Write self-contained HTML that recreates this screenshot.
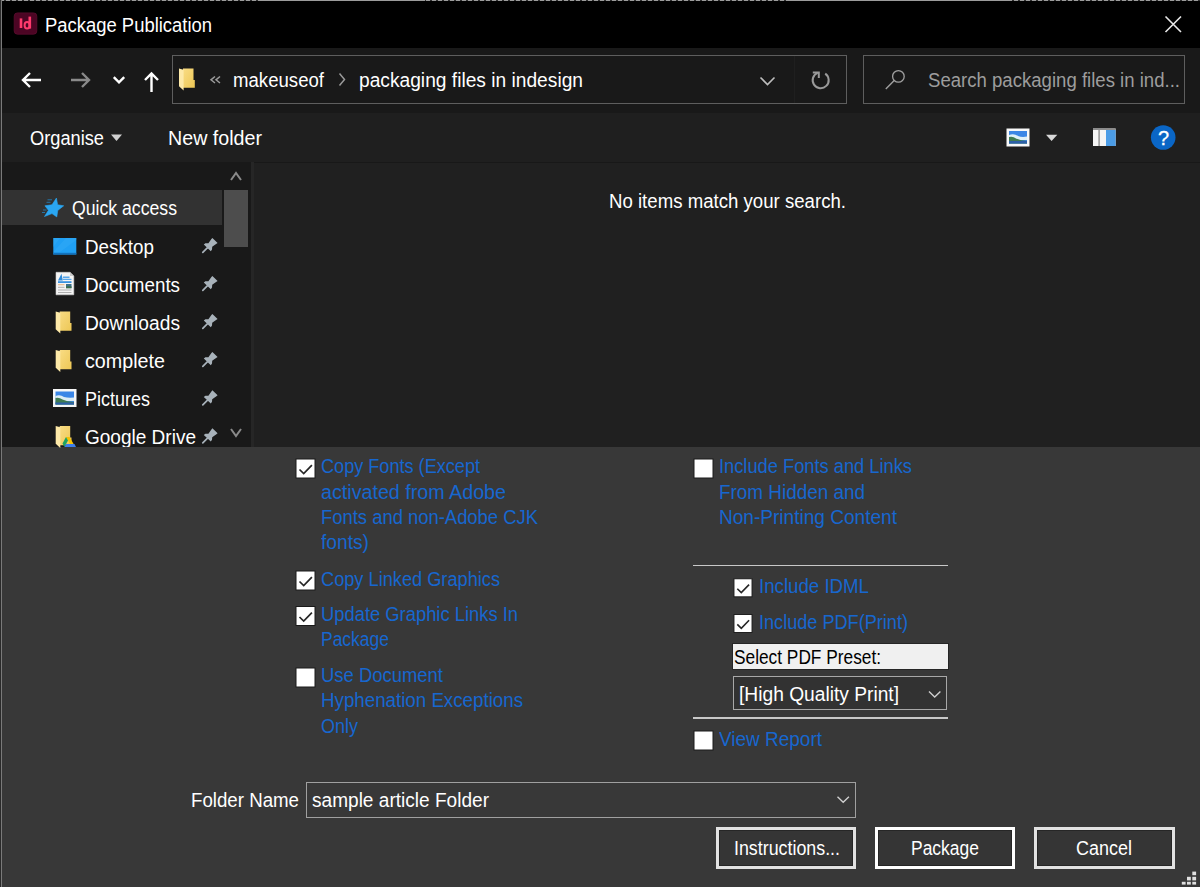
<!DOCTYPE html>
<html><head><meta charset="utf-8"><title>Package Publication</title>
<style>
html,body{margin:0;padding:0;}
body{width:1200px;height:887px;overflow:hidden;position:relative;background:#383838;font-family:'Liberation Sans', sans-serif;}
.r{position:absolute;}
.t{position:absolute;white-space:pre;font-family:'Liberation Sans', sans-serif;}
svg{position:absolute;overflow:visible;}
</style></head><body>
<!-- window backgrounds -->
<div class="r" style="left:0;top:0;width:1200px;height:48px;background:#000"></div>
<div class="r" style="left:0;top:0;width:1200px;height:1px;background:repeating-linear-gradient(90deg,#9c9c9c 0 4.5px,#303030 4.5px 6px)"></div>
<div class="r" style="left:260px;top:0;width:165px;height:1px;background:#9c9c9c"></div>
<div class="r" style="left:788px;top:0;width:222px;height:1px;background:#9c9c9c"></div>
<div class="r" style="left:1px;top:0;width:1px;height:887px;background:#7a7a7a"></div>
<div class="r" style="left:0;top:0;width:1px;height:887px;background:#2a2a2a"></div>
<!-- nav bar -->
<div class="r" style="left:2px;top:48px;width:1198px;height:65px;background:#191919"></div>
<!-- toolbar -->
<div class="r" style="left:2px;top:113px;width:1198px;height:49px;background:#1f1f1f"></div>
<!-- sidebar -->
<div class="r" style="left:2px;top:162px;width:249px;height:285px;background:#191919"></div>
<div class="r" style="left:251px;top:162px;width:3px;height:285px;background:#262626"></div>
<!-- main pane -->
<div class="r" style="left:254px;top:162px;width:946px;height:285px;background:#202020"></div>
<div class="r" style="left:254px;top:162px;width:946px;height:1px;background:#181818"></div>
<!-- quick access highlight -->
<div class="r" style="left:2px;top:190px;width:220px;height:35px;background:#323232"></div>
<!-- scrollbar thumb -->
<div class="r" style="left:224px;top:190px;width:24px;height:57px;background:#4d4d4d"></div>
<!-- bottom panel -->
<div class="r" style="left:2px;top:447px;width:1198px;height:440px;background:#383838"></div>

<!-- title icon -->
<svg style="left:0;top:0" width="50" height="48">
  <rect x="14.2" y="12.9" width="22.6" height="21.3" rx="3.2" fill="#4c0524" stroke="#5c0c2e" stroke-width="0.8"/>
  <rect x="19.7" y="18.4" width="2.6" height="9.6" fill="#ff3a6c"/>
  <rect x="28.5" y="16.6" width="2.6" height="12" fill="#ff3a6c"/>
  <ellipse cx="27.1" cy="25.3" rx="2.5" ry="3.2" fill="none" stroke="#ff3a6c" stroke-width="2"/>
</svg>


<!-- address box -->
<div class="r" style="left:172px;top:55px;width:673px;height:47px;border:1px solid #5e5e5e;background:#191919"></div>
<div class="r" style="left:794px;top:56px;width:1px;height:47px;background:#1f1f1f"></div>
<div class="r" style="left:863px;top:55px;width:320px;height:47px;border:1px solid #5e5e5e;background:#191919"></div>

<!-- Select PDF preset label bg -->
<div class="r" style="left:732px;top:642.7px;width:217px;height:27px;background:#262626"></div><div class="r" style="left:733px;top:643.7px;width:215px;height:25px;background:#f0f0f0"></div>
<!-- preset dropdown -->
<div class="r" style="left:732.5px;top:676px;width:212px;height:32px;border:1.5px solid #a8a8a8;background:#323232"></div>
<!-- separators -->
<div class="r" style="left:693px;top:564.5px;width:255px;height:1.5px;background:#c8c8c8"></div>
<div class="r" style="left:693px;top:717px;width:255px;height:1.5px;background:#c8c8c8"></div>
<!-- folder name input -->
<div class="r" style="left:306px;top:782px;width:548px;height:34px;border:1.5px solid #a0a0a0;background:#383838"></div>
<!-- buttons -->
<div class="r" style="left:716px;top:827px;width:134px;height:36px;border:3px solid #e2e2e2;background:#353535;box-shadow:inset 0 0 0 1px #262626"></div>
<div class="r" style="left:875px;top:827px;width:134px;height:36px;border:3px solid #ffffff;background:#353535;box-shadow:inset 0 0 0 1px #262626"></div>
<div class="r" style="left:1034.2px;top:827px;width:134.8px;height:36px;border:3px solid #e2e2e2;background:#353535;box-shadow:inset 0 0 0 1px #262626"></div>

<svg style="left:0;top:0" width="1200" height="887">
  <defs>
    <linearGradient id="fg" x1="0" y1="0" x2="1" y2="1"><stop offset="0" stop-color="#f9dc84"/><stop offset="1" stop-color="#edc755"/></linearGradient>
  </defs>
  <!-- close -->
  <path d="M1165.5 16.5 L1181 32 M1181 16.5 L1165.5 32" stroke="#e8e8e8" stroke-width="1.6" fill="none"/>
  <!-- nav arrows -->
  <path d="M23 80 H41 M30 73 L23 80 L30 87" stroke="#fff" stroke-width="2.4" fill="none"/>
  <path d="M71 80 H89 M82 73 L89 80 L82 87" stroke="#8a8a8a" stroke-width="2.4" fill="none"/>
  <path d="M113.8 77.2 L119 82.4 L124.2 77.2" stroke="#fff" stroke-width="2.4" fill="none"/>
  <path d="M151.5 92 V74 M145 80 L151.5 73.5 L158 80" stroke="#fff" stroke-width="2.4" fill="none"/>
  <!-- address folder -->
  <g transform="translate(179 68.5)"><path d="M4 0 H14.5 V11.5 H15.8 V19.3 H4 Z" fill="url(#fg)"/>
      <path d="M0 0 L4.6 1.3 V22 L0 17.8 Z" fill="#fde9a8"/></g>
  <!-- laquo -->
  <path d="M215 76.5 L211 79.8 L215 83 M220 76.5 L216 79.8 L220 83" stroke="#9a9a9a" stroke-width="1.5" fill="none"/>
  <!-- breadcrumb chevron -->
  <path d="M339.5 73.5 L344.5 79.5 L339.5 85.5" stroke="#9a9a9a" stroke-width="1.5" fill="none"/>
  <!-- address dropdown chevron -->
  <path d="M760.5 77.5 L767.5 84.5 L774.5 77.5" stroke="#bdbdbd" stroke-width="1.6" fill="none"/>
  <!-- refresh -->
  <path d="M825.2 73.6 A8 8 0 1 1 817.6 72.8" stroke="#9a9a9a" stroke-width="2" fill="none"/>
  <path d="M812.8 72.4 H818.8 V78" stroke="#9a9a9a" stroke-width="2" fill="none"/>
  <!-- search -->
  <circle cx="898.4" cy="76.4" r="5.8" stroke="#a0a0a0" stroke-width="1.3" fill="none"/>
  <path d="M894.2 80.6 L885.8 89" stroke="#a0a0a0" stroke-width="1.4"/>
  <!-- organise triangle -->
  <path d="M111 134.5 H122 L116.5 141 Z" fill="#d0d0d0"/>
  <!-- view image icon -->
  <rect x="1006.5" y="128.5" width="23" height="18" fill="#f8f8f8"/>
  <rect x="1009" y="131" width="18" height="12.5" fill="#3b86e6"/>
  <path d="M1009 135 Q1014 133 1018 136 Q1022 137.5 1027 136.5 V140 H1009 Z" fill="#dff0f8"/>
  <path d="M1009 137 Q1013 136 1016 138.5 Q1021 140.5 1027 141 V143.5 H1009 Z" fill="#3f7a52"/>
  <path d="M1009 141 H1027 V143.5 H1009 Z" fill="#2d5fa8"/>
  <path d="M1046 134.7 H1057.3 L1051.6 141 Z" fill="#d8d8d8"/>
  <!-- pane icon -->
  <rect x="1093" y="128.5" width="22.6" height="17.5" fill="#f4f4f4"/>
  <rect x="1093" y="128.5" width="22.6" height="1.5" fill="#8d8d8d"/>
  <rect x="1098.3" y="130" width="1.6" height="16" fill="#9a9a9a"/>
  <rect x="1106" y="130" width="9.6" height="16" fill="#4b9ce6"/>
  <!-- help -->
  <circle cx="1163.2" cy="137.5" r="12.3" fill="#0a66c6"/>
  <text x="1163.6" y="145.3" font-family="Liberation Sans" font-size="20" fill="#fff" stroke="#fff" stroke-width="0.3" text-anchor="middle">?</text>
  <!-- sidebar scroll arrows -->
  <path d="M231 180 L236 173 L241 180" stroke="#8a8a8a" stroke-width="2" fill="none"/>
  <path d="M231 429 L236 436 L241 429" stroke="#8a8a8a" stroke-width="2" fill="none"/>
  <!-- star -->
  <polygon points="56.40,198.10 57.63,204.77 63.70,205.80 57.75,210.41 56.80,216.90 51.99,213.62 44.50,216.50 48.42,210.29 44.90,205.80 51.99,204.77" fill="#2aa6f2" stroke="#2aa6f2" stroke-width="0.6" stroke-linejoin="round"/>
  <path d="M47.5 199.8 H52 M46.5 202.3 H50.5 M43 210 H46.5 M42 212.5 H45" stroke="#1f8fd6" stroke-width="0.9" opacity="0.8"/>
  <!-- desktop -->
  <rect x="53.3" y="238" width="23" height="16.5" fill="#20a0f4"/>
  <rect x="53.3" y="252.8" width="23" height="1.7" fill="#1272bd"/><path d="M60 238 L53.3 247 V238 Z M76.3 238 H66 L53.3 252 H60 L76.3 240 Z" fill="#3db0f7" opacity="0.35"/>
  <!-- documents -->
  <path d="M56 272.3 H70 L73.8 276 V294.8 H56 Z" fill="#f4f4f4" stroke="#d0d0d0" stroke-width="0.6"/>
  <path d="M70 272.3 V276 H73.8 Z" fill="#c8c8c8"/>
  <path d="M58 280.5 L61.5 273.8 L62.8 280.5 Z" fill="#2f8ad8"/>
  <rect x="63" y="276.5" width="6.5" height="1.6" fill="#5aa8ea"/>
  <rect x="63" y="278.8" width="8.5" height="1.2" fill="#5aa8ea"/>
  <rect x="58" y="281.2" width="13.5" height="1.8" fill="#3a92e0"/>
  <rect x="66" y="284" width="5.5" height="4.2" fill="#3d6f8a"/>
  <rect x="66" y="286.3" width="5.5" height="1.9" fill="#3c6e4a"/>
  <rect x="58" y="284.3" width="6.5" height="0.9" fill="#e08a3a" opacity="0.7"/>
  <rect x="58" y="286.8" width="6.5" height="1" fill="#b0b0b0"/>
  <rect x="58" y="289.5" width="13.5" height="1" fill="#b0b0b0"/>
  <rect x="58" y="292" width="13.5" height="1" fill="#b0b0b0"/>
  <!-- folders -->
  <g transform="translate(55.7 311.5)"><path d="M4 0 H14.5 V11.5 H15.8 V19.3 H4 Z" fill="url(#fg)"/>
      <path d="M0 0 L4.6 1.3 V22 L0 17.8 Z" fill="#fde9a8"/></g>
  <g transform="translate(55.7 350)"><path d="M4 0 H14.5 V11.5 H15.8 V19.3 H4 Z" fill="url(#fg)"/>
      <path d="M0 0 L4.6 1.3 V22 L0 17.8 Z" fill="#fde9a8"/></g>
  <g transform="translate(55.7 426)"><path d="M4 0 H14.5 V11.5 H15.8 V19.3 H4 Z" fill="url(#fg)"/>
      <path d="M0 0 L4.6 1.3 V22 L0 17.8 Z" fill="#fde9a8"/></g>
  <!-- pictures -->
  <rect x="53" y="389" width="23.5" height="18" fill="#f6f6f6"/>
  <rect x="55.5" y="391.5" width="18.5" height="13" fill="#3b86e6"/>
  <path d="M55.5 396 Q60 394 64 397 Q68 398 74 397.5 V401 H55.5 Z" fill="#dcecf4"/>
  <path d="M55.5 398 Q59 397 62.5 399.5 Q67 401.5 74 402 V404.5 H55.5 Z" fill="#3f7a52"/>
  <path d="M55.5 402.5 H74 V404.5 H55.5 Z" fill="#2d5fa8"/>
  <!-- google drive logo -->
  <path d="M66 437 L69.5 437 L74.5 445.5 L71 445.5 Z" fill="#f7c300"/>
  <path d="M66 437 L62.5 443.5 L64.5 447 L68 440.5 Z" fill="#1ea362"/>
  <path d="M64.5 447 L76 447 L74.5 444 H66.2 Z" fill="#3f7ee8"/>
  <!-- pins -->
  <g transform="translate(201.8 237.6)"><path d="M10.6 0.3 L15.8 5.3 L14.6 6.2 L10.4 9.2 L10.2 11.8 L9 13.6 L2 6.9 L3.6 5.7 L6.6 5.7 L9.6 1.4 Z" fill="#a8b2ba"/>
      <path d="M5.5 10.3 L1 14.8" stroke="#a8b2ba" stroke-width="1.7" stroke-linecap="round"/></g>
  <g transform="translate(201.8 275.6)"><path d="M10.6 0.3 L15.8 5.3 L14.6 6.2 L10.4 9.2 L10.2 11.8 L9 13.6 L2 6.9 L3.6 5.7 L6.6 5.7 L9.6 1.4 Z" fill="#a8b2ba"/>
      <path d="M5.5 10.3 L1 14.8" stroke="#a8b2ba" stroke-width="1.7" stroke-linecap="round"/></g>
  <g transform="translate(201.8 313.6)"><path d="M10.6 0.3 L15.8 5.3 L14.6 6.2 L10.4 9.2 L10.2 11.8 L9 13.6 L2 6.9 L3.6 5.7 L6.6 5.7 L9.6 1.4 Z" fill="#a8b2ba"/>
      <path d="M5.5 10.3 L1 14.8" stroke="#a8b2ba" stroke-width="1.7" stroke-linecap="round"/></g>
  <g transform="translate(201.8 351.6)"><path d="M10.6 0.3 L15.8 5.3 L14.6 6.2 L10.4 9.2 L10.2 11.8 L9 13.6 L2 6.9 L3.6 5.7 L6.6 5.7 L9.6 1.4 Z" fill="#a8b2ba"/>
      <path d="M5.5 10.3 L1 14.8" stroke="#a8b2ba" stroke-width="1.7" stroke-linecap="round"/></g>
  <g transform="translate(201.8 390)"><path d="M10.6 0.3 L15.8 5.3 L14.6 6.2 L10.4 9.2 L10.2 11.8 L9 13.6 L2 6.9 L3.6 5.7 L6.6 5.7 L9.6 1.4 Z" fill="#a8b2ba"/>
      <path d="M5.5 10.3 L1 14.8" stroke="#a8b2ba" stroke-width="1.7" stroke-linecap="round"/></g>
  <g transform="translate(201.8 428)"><path d="M10.6 0.3 L15.8 5.3 L14.6 6.2 L10.4 9.2 L10.2 11.8 L9 13.6 L2 6.9 L3.6 5.7 L6.6 5.7 L9.6 1.4 Z" fill="#a8b2ba"/>
      <path d="M5.5 10.3 L1 14.8" stroke="#a8b2ba" stroke-width="1.7" stroke-linecap="round"/></g>
  <!-- checkboxes -->
  <g transform="translate(295.5 458.5)"><rect x="0.5" y="0.5" width="19" height="19" fill="#ffffff" stroke="#1a1a1a" stroke-width="1"/>
      <path d="M4 11 L8.2 15 L16.4 6.6" stroke="#262626" stroke-width="1.7" fill="none"/></g>
  <g transform="translate(295.5 570.5)"><rect x="0.5" y="0.5" width="19" height="19" fill="#ffffff" stroke="#1a1a1a" stroke-width="1"/>
      <path d="M4 11 L8.2 15 L16.4 6.6" stroke="#262626" stroke-width="1.7" fill="none"/></g>
  <g transform="translate(295.5 606)"><rect x="0.5" y="0.5" width="19" height="19" fill="#ffffff" stroke="#1a1a1a" stroke-width="1"/>
      <path d="M4 11 L8.2 15 L16.4 6.6" stroke="#262626" stroke-width="1.7" fill="none"/></g>
  <g transform="translate(295.5 667.5)"><rect x="0.5" y="0.5" width="19" height="19" fill="#ffffff" stroke="#1a1a1a" stroke-width="1"/></g>
  <g transform="translate(693.5 458.5)"><rect x="0.5" y="0.5" width="19" height="19" fill="#ffffff" stroke="#1a1a1a" stroke-width="1"/></g>
  <g transform="translate(733.5 578.3) scale(0.95)"><rect x="0.5" y="0.5" width="19" height="19" fill="#ffffff" stroke="#1a1a1a" stroke-width="1"/>
      <path d="M4 11 L8.2 15 L16.4 6.6" stroke="#262626" stroke-width="1.7" fill="none"/></g>
  <g transform="translate(733.5 614) scale(0.95)"><rect x="0.5" y="0.5" width="19" height="19" fill="#ffffff" stroke="#1a1a1a" stroke-width="1"/>
      <path d="M4 11 L8.2 15 L16.4 6.6" stroke="#262626" stroke-width="1.7" fill="none"/></g>
  <g transform="translate(693.5 730.5)"><rect x="0.5" y="0.5" width="19" height="19" fill="#ffffff" stroke="#1a1a1a" stroke-width="1"/></g>
  <!-- dropdown chevrons -->
  <path d="M929 691.5 L934.7 697 L940.4 691.5" stroke="#cfcfcf" stroke-width="1.4" fill="none"/>
  <path d="M837.5 796.8 L843.2 802.3 L848.9 796.8" stroke="#cfcfcf" stroke-width="1.4" fill="none"/>
  <!-- resize grip -->
  <g fill="#e0e0e0">
    <rect x="1192.3" y="871.6" width="3.8" height="3.6"/>
    <rect x="1187" y="876.8" width="3.8" height="3.6"/><rect x="1192.3" y="876.8" width="3.8" height="3.6"/>
    <rect x="1181.8" y="881.8" width="3.8" height="2.8"/><rect x="1187" y="881.8" width="3.8" height="2.8"/><rect x="1192.3" y="881.8" width="3.8" height="2.8"/>
  </g>
</svg>

<div class="t" style="left:45.0px;top:14.00px;font-size:20px;line-height:22.34px;color:#ffffff;transform:scaleX(0.9215);transform-origin:0 0;">Package Publication</div>
<div class="t" style="left:233.0px;top:68.80px;font-size:20px;line-height:22.34px;color:#ffffff;transform:scaleX(0.9301);transform-origin:0 0;">makeuseof</div>
<div class="t" style="left:359.0px;top:68.80px;font-size:20px;line-height:22.34px;color:#ffffff;transform:scaleX(0.9593);transform-origin:0 0;">packaging files in indesign</div>
<div class="t" style="left:928.0px;top:68.80px;font-size:20px;line-height:22.34px;color:#9d9d9d;transform:scaleX(0.9289);transform-origin:0 0;">Search packaging files in ind...</div>
<div class="t" style="left:29.5px;top:127.00px;font-size:20px;line-height:22.34px;color:#ffffff;transform:scaleX(0.9118);transform-origin:0 0;">Organise</div>
<div class="t" style="left:168.0px;top:127.00px;font-size:20px;line-height:22.34px;color:#ffffff;transform:scaleX(0.9832);transform-origin:0 0;">New folder</div>
<div class="t" style="left:71.5px;top:197.40px;font-size:20px;line-height:22.34px;color:#ffffff;transform:scaleX(0.8828);transform-origin:0 0;">Quick access</div>
<div class="t" style="left:84.8px;top:235.60px;font-size:20px;line-height:22.34px;color:#ffffff;transform:scaleX(0.9404);transform-origin:0 0;">Desktop</div>
<div class="t" style="left:84.8px;top:273.60px;font-size:20px;line-height:22.34px;color:#ffffff;transform:scaleX(0.9391);transform-origin:0 0;">Documents</div>
<div class="t" style="left:84.8px;top:311.70px;font-size:20px;line-height:22.34px;color:#ffffff;transform:scaleX(0.9601);transform-origin:0 0;">Downloads</div>
<div class="t" style="left:84.8px;top:349.80px;font-size:20px;line-height:22.34px;color:#ffffff;transform:scaleX(0.9858);transform-origin:0 0;">complete</div>
<div class="t" style="left:84.8px;top:387.90px;font-size:20px;line-height:22.34px;color:#ffffff;transform:scaleX(0.8997);transform-origin:0 0;">Pictures</div>
<div class="t" style="left:84.8px;top:426.00px;font-size:20px;line-height:22.34px;color:#ffffff;transform:scaleX(0.9510);transform-origin:0 0;clip-path:inset(0 0 1.4px 0);">Google Drive</div>
<div class="t" style="left:609.3px;top:189.70px;font-size:20px;line-height:22.34px;color:#ffffff;transform:scaleX(0.9311);transform-origin:0 0;">No items match your search.</div>
<div class="t" style="left:321.0px;top:455.40px;font-size:20px;line-height:22.34px;color:#1767cf;transform:scaleX(0.9053);transform-origin:0 0;">Copy Fonts (Except</div>
<div class="t" style="left:321.0px;top:480.60px;font-size:20px;line-height:22.34px;color:#1767cf;transform:scaleX(0.9846);transform-origin:0 0;">activated from Adobe</div>
<div class="t" style="left:321.0px;top:506.10px;font-size:20px;line-height:22.34px;color:#1767cf;transform:scaleX(0.9206);transform-origin:0 0;">Fonts and non-Adobe CJK</div>
<div class="t" style="left:321.0px;top:531.40px;font-size:20px;line-height:22.34px;color:#1767cf;transform:scaleX(0.9594);transform-origin:0 0;">fonts)</div>
<div class="t" style="left:321.0px;top:567.60px;font-size:20px;line-height:22.34px;color:#1767cf;transform:scaleX(0.9096);transform-origin:0 0;">Copy Linked Graphics</div>
<div class="t" style="left:321.0px;top:603.30px;font-size:20px;line-height:22.34px;color:#1767cf;transform:scaleX(0.9181);transform-origin:0 0;">Update Graphic Links In</div>
<div class="t" style="left:321.0px;top:628.10px;font-size:20px;line-height:22.34px;color:#1767cf;transform:scaleX(0.8735);transform-origin:0 0;">Package</div>
<div class="t" style="left:321.0px;top:664.30px;font-size:20px;line-height:22.34px;color:#1767cf;transform:scaleX(0.9223);transform-origin:0 0;">Use Document</div>
<div class="t" style="left:321.0px;top:689.20px;font-size:20px;line-height:22.34px;color:#1767cf;transform:scaleX(0.9365);transform-origin:0 0;">Hyphenation Exceptions</div>
<div class="t" style="left:321.0px;top:715.00px;font-size:20px;line-height:22.34px;color:#1767cf;transform:scaleX(0.8997);transform-origin:0 0;">Only</div>
<div class="t" style="left:719.0px;top:455.20px;font-size:20px;line-height:22.34px;color:#1767cf;transform:scaleX(0.9136);transform-origin:0 0;">Include Fonts and Links</div>
<div class="t" style="left:719.0px;top:480.80px;font-size:20px;line-height:22.34px;color:#1767cf;transform:scaleX(0.9448);transform-origin:0 0;">From Hidden and</div>
<div class="t" style="left:719.0px;top:506.30px;font-size:20px;line-height:22.34px;color:#1767cf;transform:scaleX(0.9530);transform-origin:0 0;">Non-Printing Content</div>
<div class="t" style="left:759.0px;top:575.10px;font-size:20px;line-height:22.34px;color:#1767cf;transform:scaleX(0.9334);transform-origin:0 0;">Include IDML</div>
<div class="t" style="left:759.0px;top:610.90px;font-size:20px;line-height:22.34px;color:#1767cf;transform:scaleX(0.9058);transform-origin:0 0;">Include PDF(Print)</div>
<div class="t" style="left:733.6px;top:646.30px;font-size:20px;line-height:22.34px;color:#000000;transform:scaleX(0.8644);transform-origin:0 0;">Select PDF Preset:</div>
<div class="t" style="left:739.0px;top:683.00px;font-size:20px;line-height:22.34px;color:#ffffff;transform:scaleX(0.9596);transform-origin:0 0;">[High Quality Print]</div>
<div class="t" style="left:719.0px;top:727.60px;font-size:20px;line-height:22.34px;color:#1767cf;transform:scaleX(0.9486);transform-origin:0 0;">View Report</div>
<div class="t" style="left:190.7px;top:788.80px;font-size:20px;line-height:22.34px;color:#ffffff;transform:scaleX(0.9342);transform-origin:0 0;">Folder Name</div>
<div class="t" style="left:312.0px;top:788.80px;font-size:20px;line-height:22.34px;color:#ffffff;transform:scaleX(0.9535);transform-origin:0 0;">sample article Folder</div>
<div class="t" style="left:734.0px;top:837.30px;font-size:20px;line-height:22.34px;color:#ffffff;transform:scaleX(0.8912);transform-origin:0 0;">Instructions...</div>
<div class="t" style="left:911.0px;top:837.30px;font-size:20px;line-height:22.34px;color:#ffffff;transform:scaleX(0.8735);transform-origin:0 0;">Package</div>
<div class="t" style="left:1076.0px;top:837.30px;font-size:20px;line-height:22.34px;color:#ffffff;transform:scaleX(0.8994);transform-origin:0 0;">Cancel</div>
</body></html>
